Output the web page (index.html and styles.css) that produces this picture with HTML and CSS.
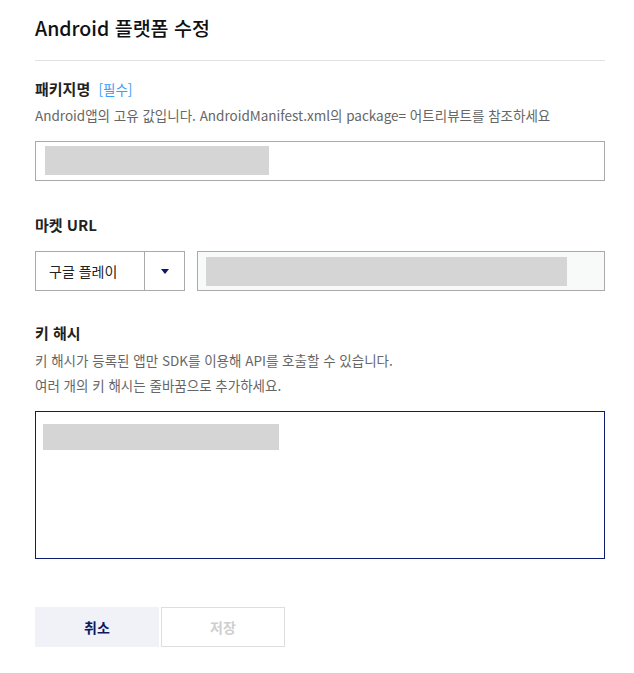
FILE: index.html
```html
<!DOCTYPE html>
<html lang="ko">
<head>
<meta charset="utf-8">
<link rel="stylesheet" href="styles.css">
</head>
<body>
<div class="page">
  <h1 class="title">Android 플랫폼 수정</h1>

  <div class="field field-first">
    <div class="label">패키지명 <span class="req">[필수]</span></div>
    <p class="desc">Android앱의 고유 값입니다. AndroidManifest.xml의 package= 어트리뷰트를 참조하세요</p>
    <div class="input"><span class="mask mask-pkg"></span></div>
  </div>

  <div class="field field-market">
    <div class="label">마켓 URL</div>
    <div class="market-row">
      <div class="select">
        <span class="select-text">구글 플레이</span>
        <span class="select-arrow"><span class="tri"></span></span>
      </div>
      <div class="input input-url"><span class="mask mask-url"></span></div>
    </div>
  </div>

  <div class="field field-hash">
    <div class="label">키 해시</div>
    <p class="desc desc-multi">키 해시가 등록된 앱만 SDK를 이용해 API를 호출할 수 있습니다.<br>여러 개의 키 해시는 줄바꿈으로 추가하세요.</p>
    <div class="textarea"><span class="mask mask-hash"></span></div>
  </div>

  <div class="buttons">
    <button class="btn btn-cancel">취소</button>
    <button class="btn btn-save">저장</button>
  </div>
</div>
</body>
</html>
```

FILE: styles.css
```css
* { box-sizing: border-box; }
html, body { margin: 0; padding: 0; background: #fff; }
body {
  font-family: "Noto Sans CJK KR", "Noto Sans", sans-serif;
  color: #222;
}
.page {
  width: 570px;
  margin-left: 35px;
  padding-top: 14px;
}
.title {
  margin: 0;
  font-size: 19.5px;
  line-height: 28px;
  font-weight: 500;
  color: #111;
  padding-bottom: 18px;
  border-bottom: 1px solid #e2e2e2;
}
.field-first { margin-top: 17px; }
.field-market { margin-top: 33px; }
.field-hash { margin-top: 31px; }
.label {
  font-size: 15px;
  line-height: 22px;
  font-weight: 700;
  color: #222;
}
.req {
  font-size: 13.5px;
  font-weight: 400;
  color: #3a9df5;
  margin-left: 4px;
}
.desc {
  margin: 5px 0 0;
  font-size: 13.5px;
  line-height: 20px;
  color: #666;
}
.desc-multi {
  margin-top: 4px;
  line-height: 25px;
}
.input {
  margin-top: 16px;
  height: 40px;
  border: 1px solid #aaa;
  padding: 4px 0 0 9px;
}
.mask {
  display: block;
  background: #d5d5d5;
}
.mask-pkg { width: 224px; height: 29px; }
.market-row {
  display: flex;
  gap: 12px;
  margin-top: 15px;
}
.select {
  display: flex;
  width: 150px;
  height: 40px;
  border: 1px solid #aaa;
  flex-shrink: 0;
}
.select-text {
  width: 109px;
  font-size: 14px;
  line-height: 38px;
  padding-left: 13px;
  color: #222;
  border-right: 1px solid #aaa;
}
.select-arrow {
  flex: 1;
  display: flex;
  align-items: center;
  justify-content: center;
}
.tri {
  width: 0;
  height: 0;
  border-left: 4px solid transparent;
  border-right: 4px solid transparent;
  border-top: 5px solid #0d1a63;
  margin-left: 1px;
}
.input-url {
  flex: 1;
  margin-top: 0;
  background: #f8f9f9;
  padding: 5px 0 0 8px;
}
.mask-url { width: 361px; height: 29px; }
.textarea {
  margin-top: 13px;
  height: 148px;
  border: 1px solid #0c1b6b;
  padding: 12px 0 0 7px;
}
.mask-hash { width: 236px; height: 26px; }
.buttons {
  display: flex;
  gap: 2px;
  margin-top: 48px;
}
.btn {
  width: 124px;
  height: 40px;
  font-family: "Noto Sans CJK KR", "Noto Sans", sans-serif;
  font-size: 14px;
  font-weight: 700;
  border: 1px solid transparent;
  padding: 0;
  margin: 0;
}
.btn-cancel {
  background: #f0f2f8;
  color: #0d1a5c;
}
.btn-save {
  background: #fff;
  border-color: #dedede;
  color: #cfcfcf;
}
```
